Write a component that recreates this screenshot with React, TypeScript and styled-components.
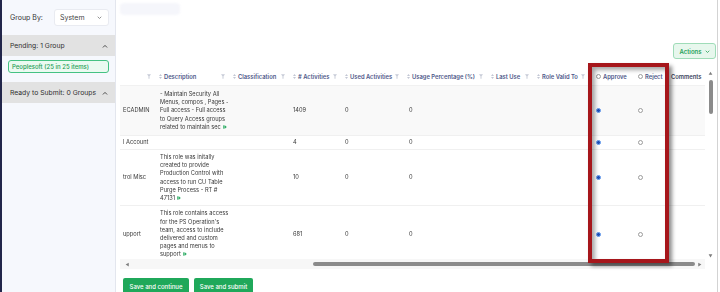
import React from 'react';
import styled, { createGlobalStyle, css } from 'styled-components';

const GlobalStyle = createGlobalStyle`
  html, body {
    margin: 0;
    padding: 0;
    background: #fff;
  }
  body {
    font-family: Inter, "Liberation Sans", sans-serif;
    color: #333;
  }
  #root {
    width: 720px;
    height: 292px;
    overflow: hidden;
  }
`;

const COLS = '34px 74px 60px 52px 62px 84px 46px 56px 42px 37px 38px';

const Shell = styled.div`
  display: flex;
  width: 720px;
  height: 292px;
  overflow: hidden;
`;

const EdgeBar = styled.div`
  width: 2px;
  flex-shrink: 0;
  background: #22264a;
`;

const Sidebar = styled.aside`
  width: 113px;
  flex-shrink: 0;
  display: flex;
  flex-direction: column;
  background: #f6f8fd;
  border-right: 1px solid #e3e6ee;

  & > * {
    flex-shrink: 0;
  }
`;

const GroupByRow = styled.div`
  height: 35px;
  display: flex;
  align-items: center;
  padding: 0 6px 0 8px;
  justify-content: space-between;
  font-size: 7px;
  color: #333;
`;

const Select = styled.div`
  width: 55px;
  height: 17px;
  box-sizing: border-box;
  display: flex;
  align-items: center;
  justify-content: space-between;
  padding: 0 6px 0 5px;
  background: #fff;
  border: 1px solid #e9ebf1;
  border-radius: 3px;
  font-size: 7px;
  color: #444;
`;

const SectionHeader = styled.div`
  height: 21px;
  display: flex;
  align-items: center;
  justify-content: space-between;
  padding: 0 7px 0 8px;
  background: #e2e2e2;
  font-size: 6.8px;
  color: #2f2f2f;
  white-space: nowrap;
`;

const ChipWrap = styled.div`
  padding: 4px 6px 9px 6px;
`;

const Chip = styled.div`
  height: 13px;
  box-sizing: border-box;
  display: flex;
  align-items: center;
  padding: 0 3px;
  background: #ebfaf1;
  border: 1.5px solid #45c283;
  border-radius: 3px;
  font-size: 6px;
  font-weight: 500;
  color: #1e9d55;
`;

const Main = styled.main`
  position: relative;
  flex: 1;
  display: flex;
  flex-direction: column;
  padding-left: 4px;
  margin-right: 2px;
  border-right: 1px solid #d3d3d3;
  overflow: hidden;

  & > * {
    flex-shrink: 0;
  }
`;

const TopBar = styled.div`
  height: 20px;
  display: flex;
  align-items: flex-start;
  padding-top: 3px;
  box-sizing: border-box;
`;

const FaintBlob = styled.div`
  width: 60px;
  height: 12px;
  border-radius: 4px;
  background: #f5f6fb;
  filter: blur(1px);
`;

const ActionsRow = styled.div`
  margin-top: 23px;
  display: flex;
  justify-content: flex-end;
  padding-right: 1px;
`;

const ActionsButton = styled.div`
  height: 16px;
  width: 43px;
  box-sizing: border-box;
  display: flex;
  align-items: center;
  justify-content: center;
  gap: 3px;
  background: #e7f7ed;
  border: 1px solid #9fdcb8;
  border-radius: 3px;
  font-size: 6px;
  font-weight: 600;
  color: #27a15a;
`;

const TableArea = styled.div`
  margin-top: 9px;
  display: flex;
`;

const TableFrame = styled.div`
  width: 585px;
  display: flex;
  flex-direction: column;
`;

const Row = styled.div<{ shaded?: boolean; h?: number }>`
  display: grid;
  grid-template-columns: ${COLS};
  min-height: ${p => p.h ?? 14}px;
  flex-shrink: 0;
  border-bottom: 1px solid #f0f0f0;
  background: ${p => (p.shaded ? '#f9f9f9' : '#fff')};
`;

const HeadRow = styled(Row)`
  height: 17px;
  border-bottom: 1px solid #f1f1f1;
`;

const HeadCell = styled.div<{ dark?: boolean; pl?: number }>`
  display: flex;
  align-items: center;
  justify-content: space-between;
  padding: 0 3px 0 ${p => p.pl ?? 5}px;
  font-size: 5.8px;
  font-weight: 600;
  white-space: nowrap;
  color: #4d5688;
  ${p => p.dark && css`
    color: #3a3f5c;
  `}
`;

const HeadLabel = styled.span`
  display: flex;
  align-items: center;
  gap: 2px;
`;

const Body = styled.div`
  height: 173px;
  overflow: hidden;
  display: flex;
  flex-direction: column;
  opacity: 0.995;
`;

const Cell = styled.div<{ pl?: number }>`
  display: flex;
  align-items: center;
  padding: 2px 2px 2px ${p => p.pl ?? 5}px;
  font-size: 5.7px;
  line-height: 8.2px;
  color: #383838;
  white-space: nowrap;
  overflow: hidden;
`;

const DescLines = styled.div`
  display: flex;
  flex-direction: column;
`;

const HScroll = styled.div`
  height: 10px;
  display: flex;
  align-items: center;
  background: #f7f7f7;
  padding: 0 3px 0 5px;
`;

const HThumb = styled.div`
  height: 4.5px;
  margin-left: 183px;
  width: 382px;
  border-radius: 3px;
  background: #8b8b8b;
`;

const VScroll = styled.div`
  width: 11px;
  height: 190px;
  box-sizing: border-box;
  display: flex;
  flex-direction: column;
  align-items: center;
  padding-top: 3px;
`;

const VThumb = styled.div`
  width: 4px;
  height: 34px;
  margin-top: 4px;
  border-radius: 2px;
  background: #8b8b8b;
`;

const Spacer = styled.div`
  flex: 1;
`;

const Footer = styled.div`
  margin-top: 9px;
  display: flex;
  gap: 5px;
  padding-left: 3px;
`;

const SaveButton = styled.div<{ w: number }>`
  width: ${p => p.w}px;
  height: 17px;
  display: flex;
  align-items: center;
  justify-content: center;
  background: #1fa85a;
  border-radius: 2px;
  font-size: 6px;
  font-weight: 500;
  color: #fff;
`;

const Highlight = styled.div`
  position: absolute;
  left: 472px;
  top: 63px;
  width: 81px;
  height: 200px;
  box-sizing: border-box;
  border: 4px solid #a6161b;
  box-shadow: 3px 3px 4px rgba(0, 0, 0, 0.45), inset 3px 3px 4px rgba(0, 0, 0, 0.35);
  pointer-events: none;
`;

const RadioDot = styled.span<{ checked?: boolean }>`
  display: inline-block;
  width: 5px;
  height: 5px;
  box-sizing: border-box;
  border-radius: 50%;
  border: 0.8px solid #9c9c9c;
  background: #fff;
  flex-shrink: 0;
  ${p => p.checked && css`
    border: 1px solid #4d8ae6;
    background: radial-gradient(circle, #1f4fb8 0 1.3px, #7fb0f2 1.6px);
  `}
`;

const Chevron = ({ up, color = '#555', size = 5 }: { up?: boolean; color?: string; size?: number }) => (
  <svg width={size} height={size} viewBox="0 0 10 10">
    <polyline
      points={up ? '2,7 5,4 8,7' : '2,4 5,7 8,4'}
      fill="none"
      stroke={color}
      strokeWidth="1.6"
      strokeLinecap="round"
      strokeLinejoin="round"
    />
  </svg>
);

const SortIcon = () => (
  <svg width="3" height="5" viewBox="0 0 6 10">
    <polygon points="3,0 6,4 0,4" fill="#c3c7d4" />
    <polygon points="0,6 6,6 3,10" fill="#c3c7d4" />
  </svg>
);

const FilterIcon = () => (
  <svg width="4" height="5" viewBox="0 0 8 9">
    <polygon points="0,0 8,0 5,4 5,9 3,9 3,4" fill="#c8ccd8" />
  </svg>
);

const MoreIcon = () => (
  <svg width="4" height="4" viewBox="0 0 8 8" style={{ marginLeft: 2 }}>
    <polygon points="0,0 4,4 0,8 0,5.5 1.5,4 0,2.5" fill="#23a85c" />
    <polygon points="3,0 7.5,4 3,8 3,5.5 4.5,4 3,2.5" fill="#23a85c" />
  </svg>
);

const Tri = ({ dir }: { dir: 'up' | 'down' | 'left' | 'right' }) => {
  const pts = {
    up: '4,1 7,6 1,6',
    down: '1,2 7,2 4,7',
    left: '6,1 6,7 1,4',
    right: '2,1 7,4 2,7',
  }[dir];
  return (
    <svg width="5" height="5" viewBox="0 0 8 8">
      <polygon points={pts} fill="#7d7d7d" />
    </svg>
  );
};

const headers = [
  { label: '', sort: false },
  { label: 'Description', sort: true },
  { label: 'Classification', sort: true },
  { label: '# Activities', sort: true },
  { label: 'Used Activities', sort: true },
  { label: 'Usage Percentage (%)', sort: true },
  { label: 'Last Use', sort: true },
  { label: 'Role Valid To', sort: true },
];

const rows = [
  {
    name: 'ECADMIN',
    desc: [
      '- Maintain Security All',
      'Menus, compos , Pages -',
      'Full access - Full access',
      'to Query Access groups',
      'related to maintain sec',
    ],
    activities: '1409',
    shaded: true,
    h: 49,
  },
  { name: 'l Account', desc: [], activities: '4', h: 13 },
  {
    name: 'trol Misc',
    desc: [
      'This role was initally',
      'created to provide',
      'Production Control with',
      'access to run CU Table',
      'Purge Process - RT #',
      '47131',
    ],
    activities: '10',
    h: 55,
  },
  {
    name: 'upport',
    desc: [
      'This role contains access',
      "for the PS Operation's",
      'team, access to include',
      'delivered and custom',
      'pages and menus to',
      'support',
    ],
    activities: '681',
    h: 56,
  },
];

export default function App() {
  return (
    <>
      <GlobalStyle />
      <Shell>
        <EdgeBar />
        <Sidebar>
          <GroupByRow>
            <span>Group By:</span>
            <Select>
              <span>System</span>
              <Chevron color="#777" size={5} />
            </Select>
          </GroupByRow>
          <SectionHeader>
            <span>Pending: 1 Group</span>
            <Chevron up color="#444" size={6} />
          </SectionHeader>
          <ChipWrap>
            <Chip>Peoplesoft (25 in 25 items)</Chip>
          </ChipWrap>
          <SectionHeader>
            <span>Ready to Submit: 0 Groups</span>
            <Chevron up color="#444" size={6} />
          </SectionHeader>
        </Sidebar>

        <Main>
          <TopBar>
            <FaintBlob />
          </TopBar>
          <ActionsRow>
            <ActionsButton>
              Actions <Chevron color="#27a15a" size={5} />
            </ActionsButton>
          </ActionsRow>

          <TableArea>
            <TableFrame>
              <HeadRow>
                {headers.map((h, i) => (
                  <HeadCell key={i}>
                    <HeadLabel>
                      {h.sort && <SortIcon />}
                      {h.label}
                    </HeadLabel>
                    <FilterIcon />
                  </HeadCell>
                ))}
                <HeadCell pl={8}>
                  <HeadLabel>
                    <RadioDot /> Approve
                  </HeadLabel>
                </HeadCell>
                <HeadCell pl={8}>
                  <HeadLabel>
                    <RadioDot /> Reject
                  </HeadLabel>
                </HeadCell>
                <HeadCell pl={4} dark>
                  Comments
                </HeadCell>
              </HeadRow>

              <Body>
                {rows.map(r => (
                  <Row key={r.name} shaded={r.shaded} h={r.h}>
                    <Cell pl={3}>{r.name}</Cell>
                    <Cell pl={6}>
                      <DescLines>
                        {r.desc.map((line, i) => (
                          <span key={i}>
                            {line}
                            {i === r.desc.length - 1 && <MoreIcon />}
                          </span>
                        ))}
                      </DescLines>
                    </Cell>
                    <Cell />
                    <Cell>{r.activities}</Cell>
                    <Cell>0</Cell>
                    <Cell pl={7}>0</Cell>
                    <Cell />
                    <Cell />
                    <Cell pl={8}>
                      <RadioDot checked />
                    </Cell>
                    <Cell pl={8}>
                      <RadioDot />
                    </Cell>
                    <Cell />
                  </Row>
                ))}
              </Body>

              <HScroll>
                <Tri dir="left" />
                <HThumb />
                <Spacer />
                <Tri dir="right" />
              </HScroll>
            </TableFrame>

            <VScroll>
              <Tri dir="up" />
              <VThumb />
              <Spacer />
              <Tri dir="down" />
            </VScroll>
          </TableArea>

          <Footer>
            <SaveButton w={66}>Save and continue</SaveButton>
            <SaveButton w={59}>Save and submit</SaveButton>
          </Footer>

          <Highlight />
        </Main>
      </Shell>
    </>
  );
}
